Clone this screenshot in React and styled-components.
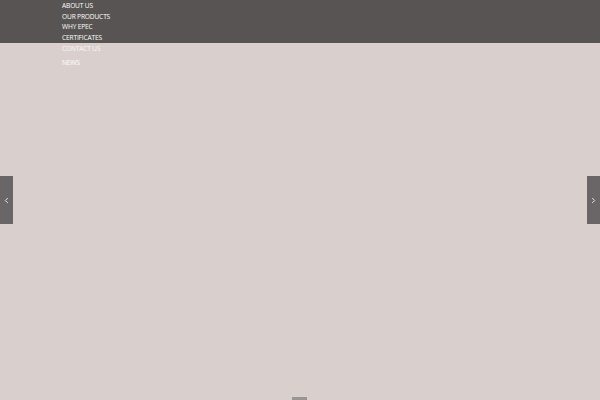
import React from "react";
import styled, { createGlobalStyle } from "styled-components";

const Global = createGlobalStyle`
  html, body { margin: 0; padding: 0; }
  body { background: #d9cfcd; font-family: "Open Sans", "Liberation Sans", sans-serif; }
  #root { height: 400px; }
`;

const Page = styled.div`
  position: relative;
  width: 600px;
  height: 400px;
  overflow: hidden;
  background: #d9cfcd;
`;

const Header = styled.header`
  height: 43px;
  background: #585453;
`;

const Menu = styled.ul`
  position: absolute;
  top: 1px;
  left: 62px;
  margin: 0;
  padding: 0;
  list-style: none;
  display: flex;
  flex-direction: column;
`;

const Item = styled.li`
  font-size: 6.6px;
  letter-spacing: -0.15px;
  line-height: 10.7px;
  color: #ffffff;
  text-transform: uppercase;
  margin-top: ${(p) => (p.$gap ? "3px" : "0")};
  opacity: ${(p) => (p.$faded ? 0.85 : 1)};
`;

const Arrow = styled.div`
  position: absolute;
  top: 176px;
  ${(p) => (p.$side === "left" ? "left: 0;" : "right: 0;")}
  width: 13px;
  height: 48px;
  background: #6a6566;
  display: flex;
  align-items: center;
  justify-content: center;
`;

const Dot = styled.div`
  position: absolute;
  left: 292px;
  bottom: 0;
  width: 15px;
  height: 3px;
  background: #9a9595;
`;

const Chevron = ({ dir }) => (
  <svg width="5" height="7" viewBox="0 0 5 7">
    <path
      d={dir === "left" ? "M3.8 1 L1.3 3.5 L3.8 6" : "M1.2 1 L3.7 3.5 L1.2 6"}
      fill="none"
      stroke="#e8e4e4"
      strokeWidth="1"
    />
  </svg>
);

export default function App() {
  return (
    <Page>
      <Global />
      <Header />
      <Menu>
        <Item>About us</Item>
        <Item>Our products</Item>
        <Item>Why EPEC</Item>
        <Item>Certificates</Item>
        <Item $faded>Contact us</Item>
        <Item $gap>News</Item>
      </Menu>
      <Arrow $side="left"><Chevron dir="left" /></Arrow>
      <Arrow $side="right"><Chevron dir="right" /></Arrow>
      <Dot />
    </Page>
  );
}
